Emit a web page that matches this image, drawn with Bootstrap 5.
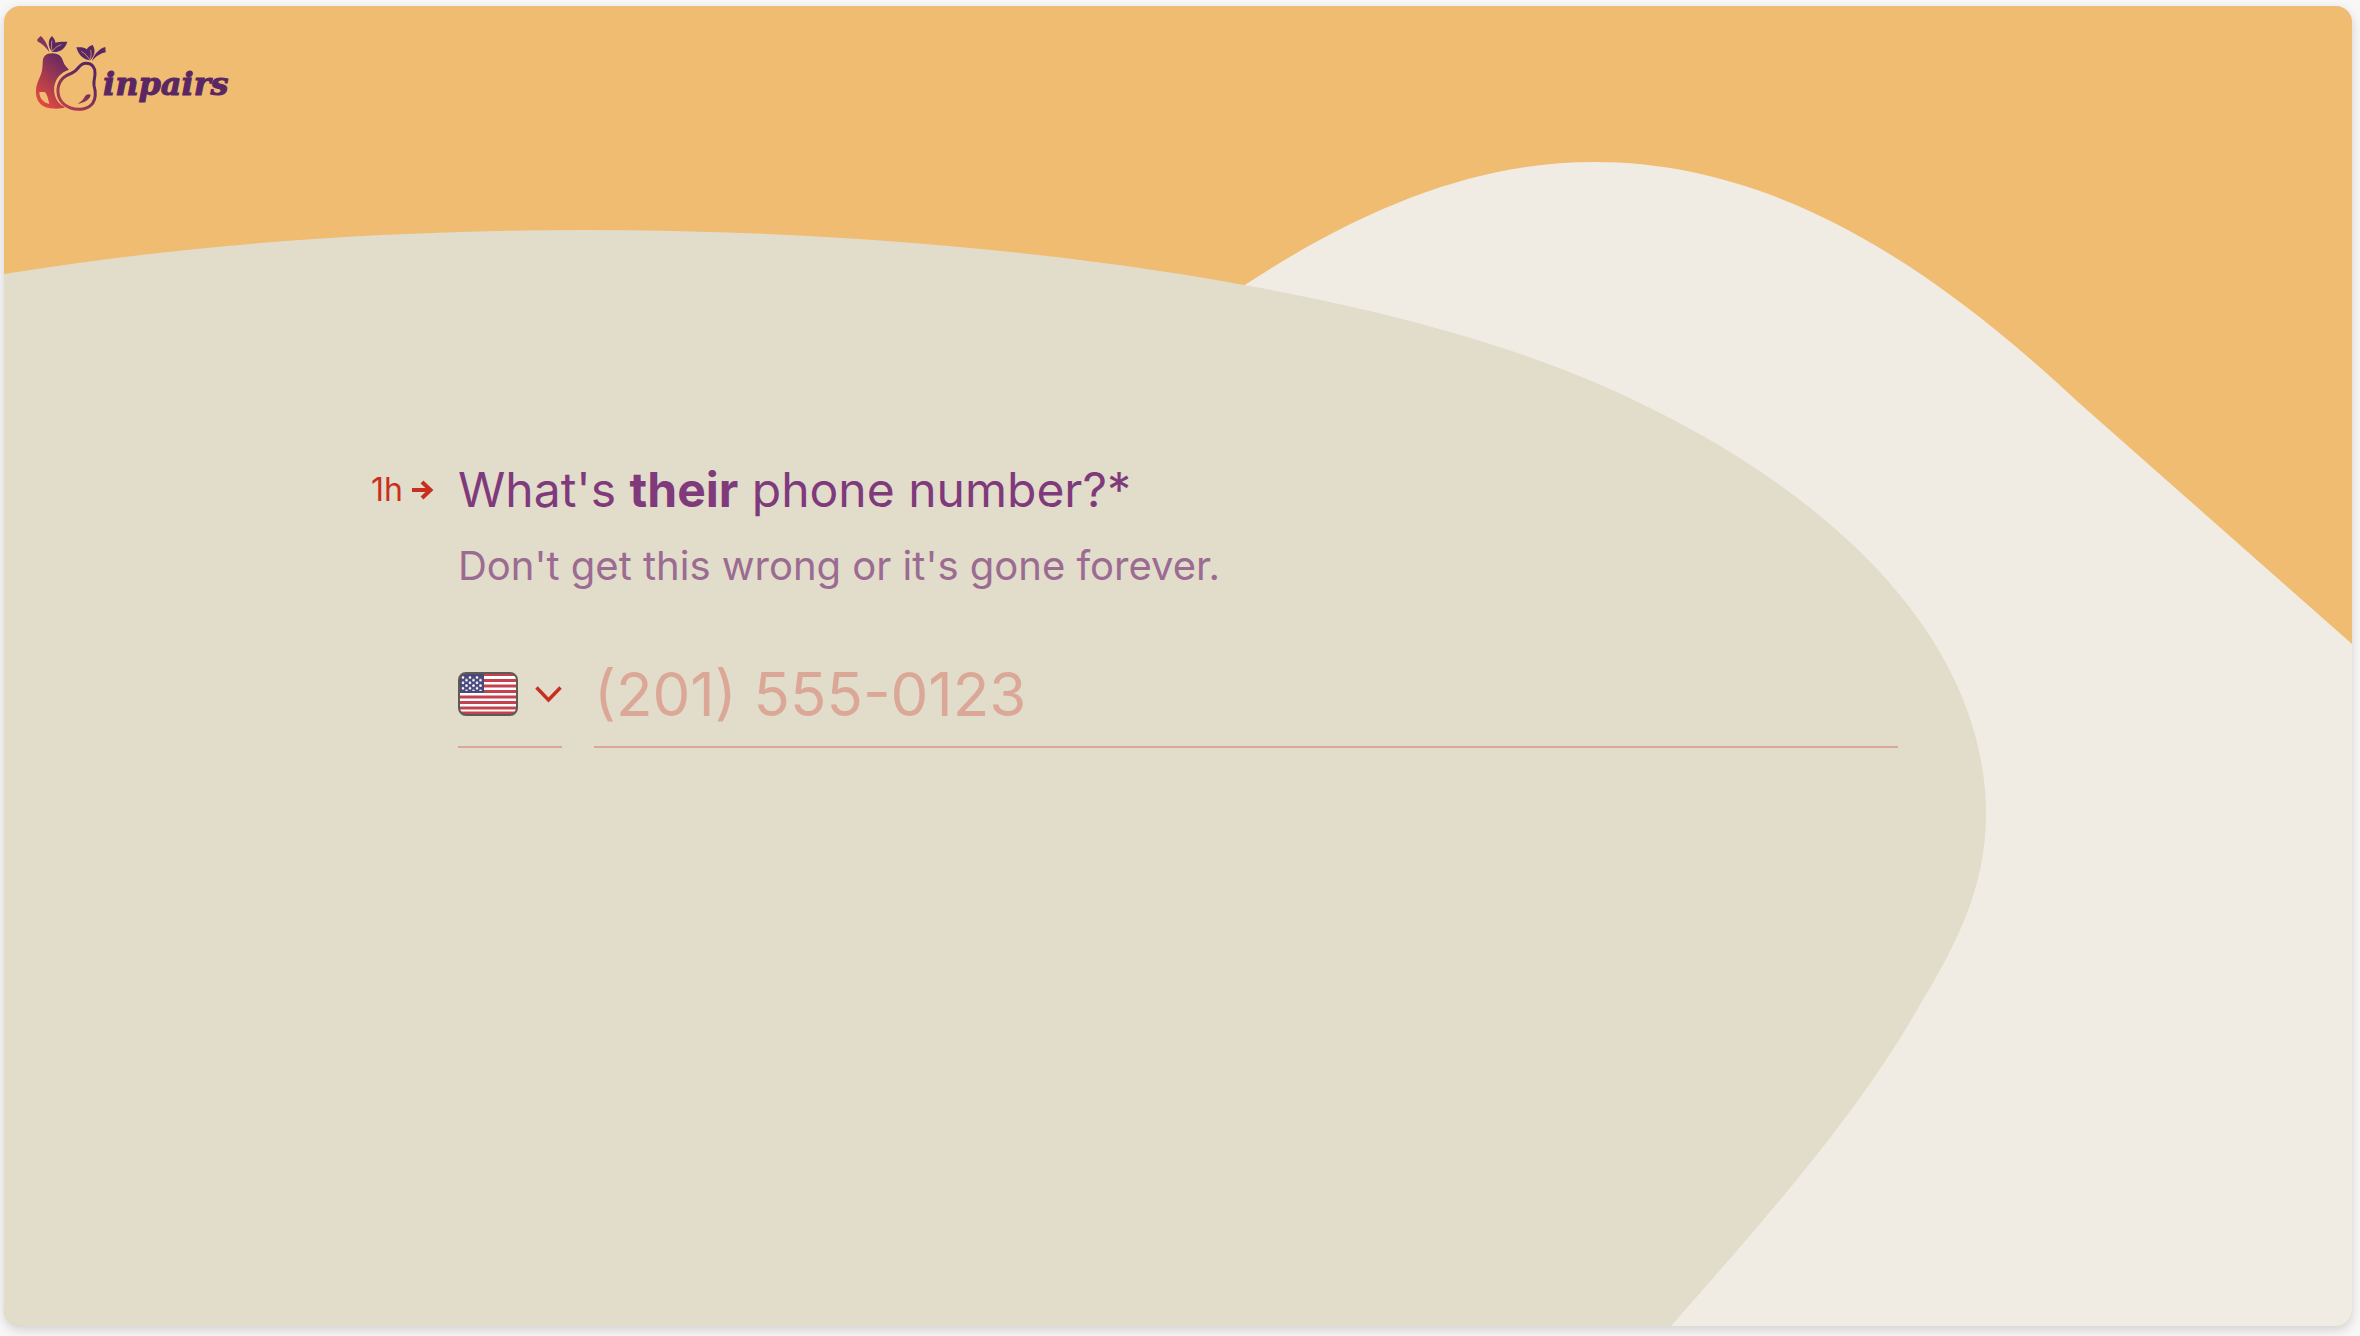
<!DOCTYPE html>
<html lang="en">
<head>
<meta charset="utf-8">
<meta name="viewport" content="width=device-width, initial-scale=1">
<title>inpairs</title>
<link href="https://cdn.jsdelivr.net/npm/bootstrap@5.3.0/dist/css/bootstrap.min.css" rel="stylesheet">
<style>
  :root {
    --plum: #7f3a7b;
    --brick: #c92f1e;
    --rule: #dba898;
  }
  body {
    background: #f8f8f8;
    font-family: Inter, "Liberation Sans", sans-serif;
    padding: 6px 8px 10px 4px;
  }
  .survey {
    min-height: calc(100vh - 16px);
    border-radius: 16px;
    background: #efbc71;
    box-shadow: 0 4px 12px rgba(0, 0, 0, .16);
  }
  .waves { z-index: 0; }
  .survey > header, .survey > main { z-index: 1; }
  .brand { padding: 27px 28px 0; height: 108px; color: #5b2763; }
  .brand-text {
    font: italic bold 32px/40px "DejaVu Serif", serif;
    padding-top: 31px;
    margin-left: -4px;
    -webkit-text-stroke: 1px #5b2763;
  }
  .question {
    width: 100%;
    max-width: 1614px;
    padding: 344px 87px 0 0;
  }
  .step { width: 87px; height: 64px; gap: 9px; color: var(--brick); font-size: 32px; }
  .ask { font-size: 48px; line-height: 64px; color: var(--plum); font-weight: 400; margin: 0 0 16px; }
  .hint { font-size: 40px; line-height: 56px; color: #9b6b92; margin: 0 0 64px; }
  .fields { gap: 32px; }
  .country {
    width: 104px;
    height: 90px;
    padding: 0 0 16px;
    background: none;
    border: 0;
    border-bottom: 2px solid var(--rule);
  }
  .phone {
    height: 90px;
    padding: 0 0 16px;
    min-width: 0;
    background: none;
    border: 0;
    border-bottom: 2px solid var(--rule);
    border-radius: 0;
    font-size: 60px;
    line-height: 72px;
    color: var(--brick);
    outline: 0;
  }
  .phone::placeholder { color: var(--rule); opacity: 1; }
</style>
<script src="https://cdn.jsdelivr.net/npm/bootstrap@5.3.0/dist/js/bootstrap.bundle.min.js"></script>
</head>
<body>
<div class="survey position-relative overflow-hidden d-flex flex-column">
  <svg class="waves position-absolute top-0 start-0 w-100 h-100" viewBox="4 6 2348 1320" preserveAspectRatio="none" aria-hidden="true">
    <path fill="#f0ece3" d="M1240 288C1368 204 1480 162 1595 162C1760 162 1914 248 2078 402L2352 644V1326H1240Z"/>
    <path fill="#e2dccb" d="M4 274C190 244 385 230 585 230C960 230 1379 282 1619 393C1839 494 1986 644 1986 814C1986 900 1946 962 1899 1040C1840 1134 1760 1225 1671 1326H4Z"/>
  </svg>

  <header class="position-relative d-flex">
    <a class="brand d-flex text-decoration-none" href="#">
      <svg width="75" height="80" viewBox="96 99 225 240" aria-hidden="true">
        <defs>
          <linearGradient id="pear" gradientUnits="userSpaceOnUse" x1="120" y1="305" x2="222" y2="186">
            <stop offset="0" stop-color="#e04840"/>
            <stop offset="1" stop-color="#5b2763"/>
          </linearGradient>
          <linearGradient id="pearline" gradientUnits="userSpaceOnUse" x1="150" y1="350" x2="260" y2="230">
            <stop offset="0" stop-color="#e04840"/>
            <stop offset="1" stop-color="#5b2763"/>
          </linearGradient>
        </defs>
        <path fill="url(#pear)" fill-rule="evenodd" d="M128 190C128 168 138 160 157 160C178 160 186 172 190 186C194 198 202 203 207 209C190 214 176 226 168 242C156 268 162 306 195 322C185 327 165 327 150 325C120 320 106 300 108 270C110 240 128 230 128 190ZM118 276C118 295 130 308 148 312C144 296 140 276 132 276Z"/>
        <path fill="none" stroke="url(#pearline)" stroke-width="9" d="M258 190C276 190 285 202 285 220C285 236 280 242 282 256C287 274 290 292 278 310C264 328 236 332 212 324C186 314 172 296 174 266C178 236 198 226 216 219C236 211 236 190 258 190Z"/>
        <path fill="url(#pearline)" d="M233 311C250 309 270 300 272 284C264 280 256 284 252 294C248 302 240 306 233 311Z"/>
        <path fill="#84345c" d="M112 118L122 108C134 118 144 136 148 156C138 144 126 130 112 124Z"/>
        <path fill="#5b2763" d="M157 156C142 138 144 118 156 108C163 116 166 122 166 128C178 124 190 125 202 125C196 144 182 158 157 156ZM270 181C246 178 234 160 229 142C242 141 252 141 260 148C264 142 268 138 278 135C288 150 284 168 270 181ZM276 184C280 166 296 146 316 141L317 157C302 160 288 168 276 184Z"/>
        <path fill="none" stroke="#efbc71" stroke-width="2" d="M157 154C153 142 154 132 156 122M158 154C163 144 172 138 184 134M269 179C262 168 254 160 244 154M270 179C274 168 274 160 272 150"/>
      </svg>
      <span class="brand-text">inpairs</span>
    </a>
  </header>

  <main class="question position-relative d-flex mx-auto">
    <div class="step d-flex flex-shrink-0 align-items-center">
      <span>1h</span>
      <svg width="22" height="20" viewBox="0 0 22 20" aria-hidden="true"><path d="M0 10H18M10 2L18.500 10L10 18" fill="none" stroke="#c92f1e" stroke-width="4"/></svg>
    </div>
    <div class="flex-grow-1">
      <h1 class="ask"><label for="phone">What's <strong>their</strong> phone number?*</label></h1>
      <p class="hint" id="hint">Don't get this wrong or it's gone forever.</p>
      <div class="fields d-flex">
        <button type="button" class="country d-flex align-items-center justify-content-between flex-shrink-0" aria-label="Country: United States">
          <svg width="60" height="44" viewBox="0 0 60 44" aria-hidden="true">
            <defs>
              <clipPath id="flagclip"><rect x="1" y="1" width="58" height="42" rx="7"/></clipPath>
              <pattern id="stars" x="3" y="4" width="7" height="5.400" patternUnits="userSpaceOnUse">
                <circle cx="2" cy="1.500" r="1.300" fill="#fff"/><circle cx="5.500" cy="4.200" r="1.300" fill="#fff"/>
              </pattern>
            </defs>
            <g clip-path="url(#flagclip)">
              <rect width="60" height="44" fill="#fff"/>
              <path stroke="#c5414d" stroke-width="3" d="M0 2.500H60M0 8.500H60M0 14H60M0 19.500H60M0 25H60M0 30.500H60M0 36H60M0 41H60"/>
              <rect width="26" height="21" fill="#4a497c"/>
              <rect x="3" y="4" width="21" height="15" fill="url(#stars)"/>
            </g>
            <rect x="1" y="1" width="58" height="42" rx="7" fill="none" stroke="#5f5a53" stroke-width="2"/>
          </svg>
          <svg width="27" height="17" viewBox="0 0 27 17" aria-hidden="true"><path d="M1.500 1.500L13.500 14L25.500 1.500" fill="none" stroke="#c92f1e" stroke-width="3.500"/></svg>
        </button>
        <input class="phone flex-grow-1" id="phone" type="tel" placeholder="(201) 555-0123" aria-describedby="hint">
      </div>
    </div>
  </main>
</div>
</body>
</html>
